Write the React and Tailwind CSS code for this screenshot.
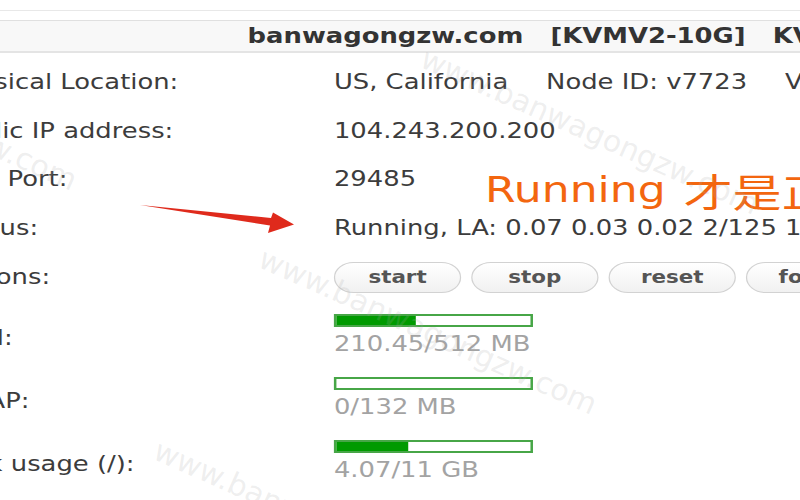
import React from 'react';

// panel data
const rows = [
    { label: "Physical Location:", values: ["US, California", "Node ID: v7723", "VM type: KVM"] },
    { label: "Public IP address:", values: ["104.243.200.200"] },
    { label: "SSH Port:", values: ["29485"] },
    { label: "Status:", values: ["Running, LA: 0.07 0.03 0.02 2/125 1532"] },
];

const usage = [
    { label: "RAM:", used: 210.45, total: 512, text: "210.45/512 MB" },
    { label: "SWAP:", used: 0, total: 132, text: "0/132 MB" },
    { label: "Disk usage (/):", used: 4.07, total: 11, text: "4.07/11 GB" },
];

const buttons = ["start", "stop", "reset", "force"];

const marks = [
    { cls: "left-[432px] top-[36px]" },
    { cls: "left-[-250px] top-[12px]" },
    { cls: "left-[270px] top-[236px]" },
    { cls: "left-[165px] top-[428px]" },
];

const App = () => {
    return (
        <div className="relative w-[800px] h-[500px] overflow-hidden bg-white font-['DejaVu_Sans',Verdana,sans-serif] text-[#3c3c3c]">
            {/* whole panel is stretched sideways like the screenshot */}
            <div className="relative w-[640px] origin-top-left scale-x-[1.26]">
                <div className="h-[10px]" />
                <div className="h-[10px] border-t border-[#e8e8e8]" />
                <div className="h-[33px] border-t border-[#e0e0e0] border-b-2 border-b-[#e4e4e4] bg-[#f8f8f8] flex items-center gap-[21.5px] pl-[196.5px] whitespace-nowrap text-[20.5px] font-bold text-[#333]">
                    <span>banwagongzw.com</span>
                    <span>[KVMV2-10G]</span>
                    <span>KVM</span>
                </div>

                <div className="-ml-[42px] mt-[5px] text-[20.5px] whitespace-nowrap">
                    {rows.map((row) => (
                        <div key={row.label} className="flex items-center h-[48.7px]">
                            <div className="w-[307px] shrink-0">{row.label}</div>
                            <div className="flex gap-[30px]">
                                {row.values.map((v) => (
                                    <span key={v}>{v}</span>
                                ))}
                            </div>
                        </div>
                    ))}

                    <div className="flex items-center h-[48.7px]">
                        <div className="w-[307px] shrink-0">Actions:</div>
                        <div className="flex gap-[8px]">
                            {buttons.map((b) => (
                                <button
                                    key={b}
                                    className="w-[101px] h-[31px] shrink-0 rounded-full border border-[#d2d2d2] bg-gradient-to-b from-white to-[#f1f1f1] text-[17px] font-bold text-[#555] leading-none"
                                >
                                    {b}
                                </button>
                            ))}
                        </div>
                    </div>

                    <div className="h-[2px]" />
                    {usage.map((u) => (
                        <div key={u.label} className="flex items-center h-[63px]">
                            <div className="w-[307px] shrink-0 pt-[7px]">{u.label}</div>
                            <div className="flex flex-col">
                                <div className="w-[158px] h-[13px] border-2 border-[#47a647] bg-white">
                                    <div className="h-full bg-[#009a00]" style={{ width: `${(u.used / u.total) * 100}%` }} />
                                </div>
                                <div className="mt-[5px] leading-[24px] text-[#a3a3a3]">{u.text}</div>
                            </div>
                        </div>
                    ))}
                </div>

                {/* annotation */}
                <div className="absolute left-[385px] top-[170px] flex items-center whitespace-nowrap leading-[40px] text-[#f3660f]">
                    <span className="text-[35px]">Running</span>
                    <span className="ml-[14px] text-[39px] font-['Noto_Sans_CJK_SC',sans-serif]">才是正常状态</span>
                </div>
            </div>

            {/* red arrow */}
            <svg className="absolute left-0 top-0 pointer-events-none" width="800" height="500">
                <polygon
                    points="140,205 271,218 273,212.5 294,224.5 268,233 270,225.5"
                    fill="#df2a1c"
                />
            </svg>

            {/* watermark */}
            {marks.map((m, i) => (
                <div
                    key={i}
                    className={`absolute ${m.cls} origin-top-left rotate-[24deg] whitespace-nowrap text-[30px] text-[rgba(170,170,170,0.2)] pointer-events-none`}
                >
                    www.banwagongzw.com
                </div>
            ))}
        </div>
    );
};

export default App;
